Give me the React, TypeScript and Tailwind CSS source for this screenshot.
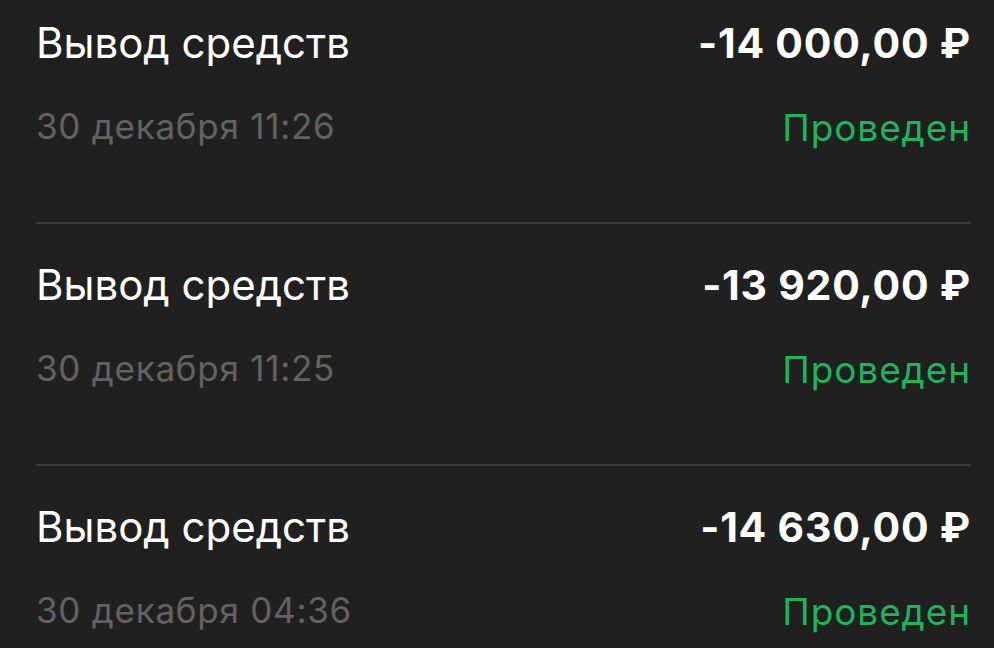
import React from 'react';

interface Operation {
  title: string;
  amount: string;
  date: string;
  status: string;
}

const operations: Operation[] = [
  { title: 'Вывод средств', amount: '-14 000,00 ₽', date: '30 декабря 11:26', status: 'Проведен' },
  { title: 'Вывод средств', amount: '-13 920,00 ₽', date: '30 декабря 11:25', status: 'Проведен' },
  { title: 'Вывод средств', amount: '-14 630,00 ₽', date: '30 декабря 04:36', status: 'Проведен' },
];

const OperationRow: React.FC<{ op: Operation }> = ({ op }) => (
  <div className="flex flex-col pt-[36px] first:pt-[18px] pb-[74px] border-b-2 border-[#3a3a3a]">
    {/* Title + amount */}
    <div className="flex items-baseline justify-between leading-[50px]">
      <span className="text-[42px] text-white">{op.title}</span>
      <span className="text-[41px] font-bold tracking-[0.75px] text-white">{op.amount}</span>
    </div>
    {/* Date + status */}
    <div className="mt-[36px] flex items-baseline justify-between leading-[44px]">
      <span className="text-[35px] tracking-[0.75px] text-[#626262]">{op.date}</span>
      <span className="relative top-[2px] text-[37px] tracking-[0.9px] text-[#1fb35b]">{op.status}</span>
    </div>
  </div>
);

export default function App() {
  return (
    <div className="min-h-screen w-full overflow-hidden bg-[#202020] font-['Inter',sans-serif]">
      <div className="pl-[36px] pr-[23px]">
        {operations.map((op, i) => (
          <OperationRow key={i} op={op} />
        ))}
      </div>
    </div>
  );
}
